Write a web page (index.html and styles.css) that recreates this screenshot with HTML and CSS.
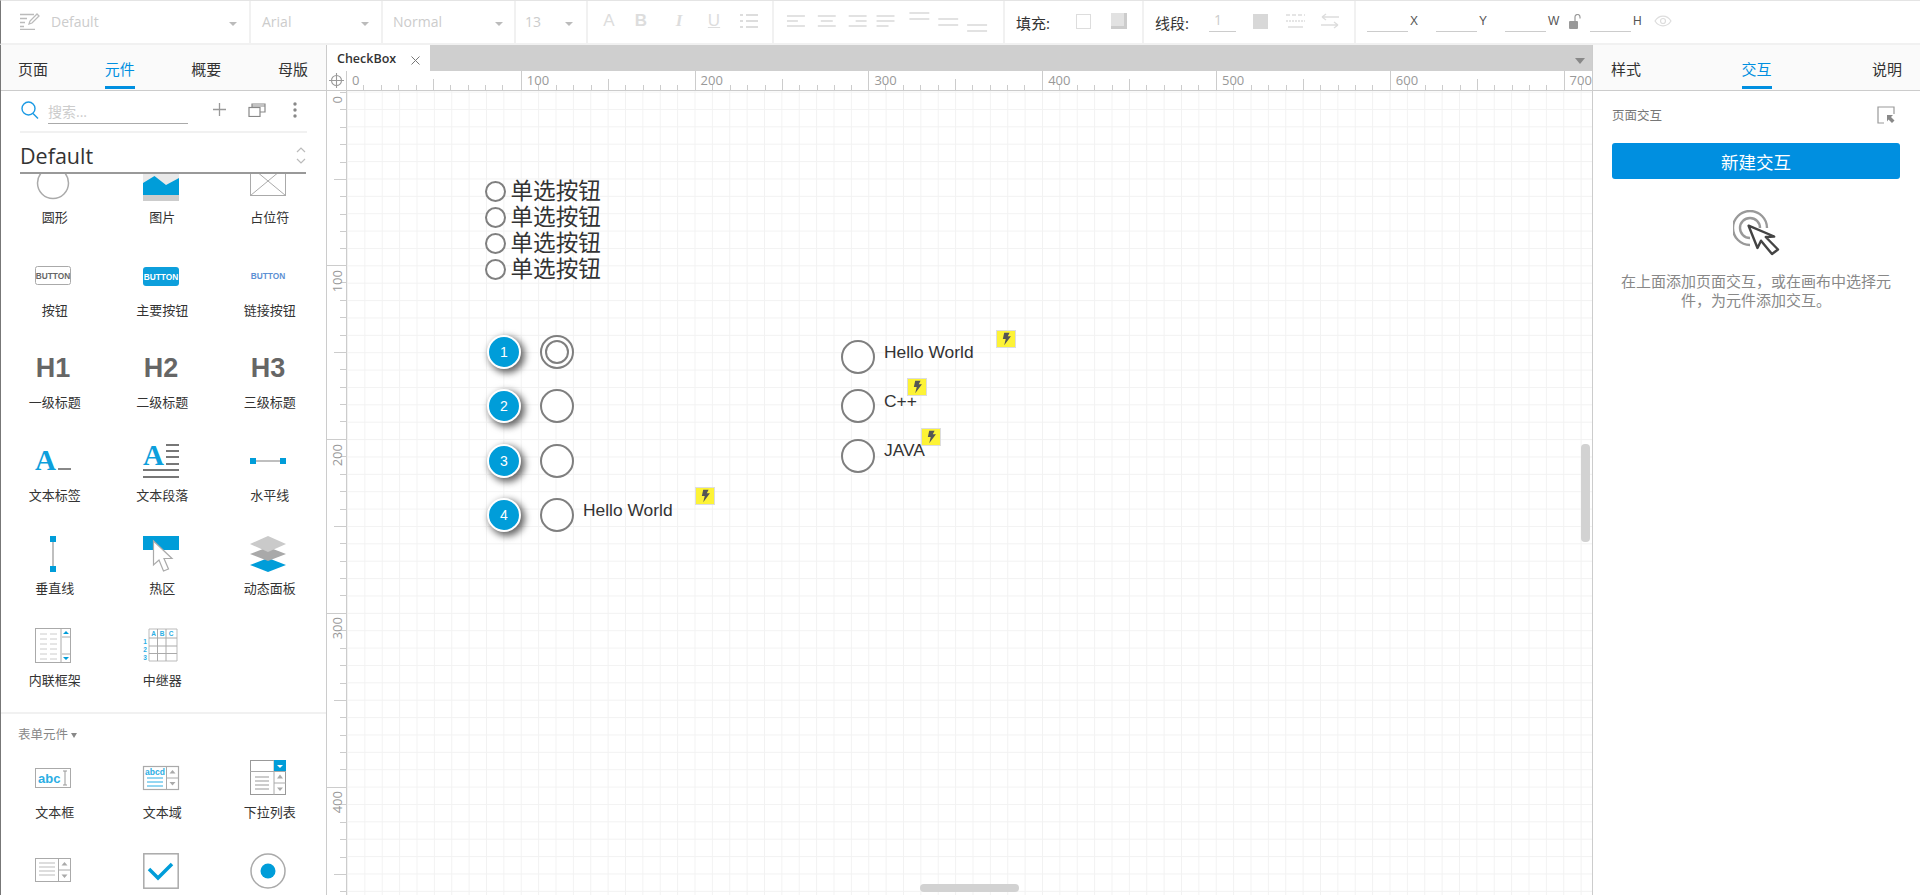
FILE: index.html
```html
<!DOCTYPE html>
<html lang="zh-CN">
<head>
  <meta charset="UTF-8" />
  <title>CheckBox</title>
  <link rel="stylesheet" href="styles.css">
</head>
<body>
  <svg class="defs" width="0" height="0">
    <symbol id="bolt" viewBox="0 0 20 17">
      <path d="M8 1.500h6l-2 4h3.500l-7.500 10 1.700-7h-3.200z" fill="#555"/>
    </symbol>
  </svg>

  <header class="toolbar">
    <div class="tb-group g-style">
      <svg class="tb-edit" width="20" height="18" viewBox="0 0 20 18" fill="none" stroke="#bbb" stroke-width="1.300"><path d="M0 2.500h14M0 6.500h7M0 10.500h5M0 14.500h4M0 17.300h15"/><path d="M9 12l1-3 7-7 2 2-7 7z"/></svg>
      <span class="tb-value">Default</span><i class="caret"></i>
    </div>
    <div class="tb-group g-font"><span class="tb-value">Arial</span><i class="caret"></i></div>
    <div class="tb-group g-weight"><span class="tb-value">Normal</span><i class="caret"></i></div>
    <div class="tb-group g-size"><span class="tb-value">13</span><i class="caret"></i></div>
    <div class="tb-group g-text">
      <span class="fmt">A</span><span class="fmt bold">B</span><span class="fmt ital">I</span><span class="fmt under">U</span>
      <svg width="18" height="16" viewBox="0 0 18 16" fill="none" stroke="#ddd" stroke-width="2"><path d="M0 2h3M6 2h12M0 8h3M6 8h12M0 14h3M6 14h12"/></svg>
    </div>
    <div class="tb-group g-align">
      <svg width="230" height="44" viewBox="0 0 230 44" fill="none" stroke="#e2e2e2" stroke-width="2">
        <path d="M13 17h18M13 22h11M13 27h18M44 17h18M47 22h12M44 27h18M75 17h18M82 22h11M75 27h18M103 17h18M103 22h18M103 27h12"/>
        <path d="M136 14h20M136 20h20M165 20h20M165 26h20M194 26h20M194 32h20"/>
      </svg>
    </div>
    <div class="tb-group g-fill">
      <span class="tb-label">填充:</span>
      <i class="swatch empty"></i>
      <i class="swatch shade"></i>
    </div>
    <div class="tb-group g-line">
      <span class="tb-label">线段:</span>
      <span class="line-num">1</span>
      <i class="swatch solid"></i>
      <svg width="19" height="16" viewBox="0 0 19 16" fill="none" stroke="#ddd" stroke-width="1.500"><path d="M0 2h19" stroke-dasharray="4 2"/><path d="M0 8h19" stroke-dasharray="2 1"/><path d="M2 14h15"/></svg>
      <svg width="18" height="16" viewBox="0 0 18 16" fill="none" stroke="#ddd" stroke-width="1.300"><path d="M1 4h17M1 4l4-3M1 4l4 3M0 12h17M17 12l-4-3M17 12l-4 3"/></svg>
    </div>
    <div class="tb-group g-geom">
      <span class="field"></span><span class="field-key">X</span>
      <span class="field"></span><span class="field-key">Y</span>
      <span class="field"></span><span class="field-key key-w">W</span>
      <svg class="lock" width="12" height="15" viewBox="0 0 12 15"><path d="M6 7V3a2.500 2.500 0 0 1 5 0v1.500" fill="none" stroke="#999" stroke-width="1.200"/><rect x="0" y="7" width="9" height="8" rx="1" fill="#999"/></svg>
      <span class="field"></span><span class="field-key key-h">H</span>
      <svg class="eye" width="18" height="12" viewBox="0 0 18 12" fill="none" stroke="#ddd" stroke-width="1.200"><path d="M1 6c4-6.500 12-6.500 16 0-4 6.500-12 6.500-16 0z"/><circle cx="9" cy="6" r="2.500"/></svg>
    </div>
  </header>

  <main class="workspace">
    <aside class="left-panel">
      <nav class="tabs">
        <span class="tab">页面</span><span class="tab active">元件</span><span class="tab">概要</span><span class="tab">母版</span>
      </nav>
      <div class="search-row">
        <svg class="search-icon" width="18" height="18" viewBox="0 0 18 18" fill="none" stroke="#1b9ae4" stroke-width="1.400"><circle cx="7.500" cy="7.500" r="6.500"/><path d="M12 12.500l5 5"/></svg>
        <span class="search-input">搜索...</span>
        <svg class="search-add" width="13" height="13" viewBox="0 0 13 13" stroke="#999" stroke-width="1.300"><path d="M6.500 0v13M0 6.500h13"/></svg>
        <svg class="search-copy" width="18" height="14" viewBox="0 0 18 14" fill="none" stroke="#888" stroke-width="1.200"><rect x="1" y="4.500" width="11" height="9"/><path d="M4 4.500V1h13v8h-5M4 3h13"/></svg>
        <svg class="search-more" width="4" height="16" viewBox="0 0 4 16" fill="#888"><circle cx="2" cy="2" r="1.700"/><circle cx="2" cy="8" r="1.700"/><circle cx="2" cy="14" r="1.700"/></svg>
      </div>
      <div class="library">
        <span>Default</span>
        <svg width="10" height="17" viewBox="0 0 10 17" fill="none" stroke="#bbb" stroke-width="1.200"><path d="M1 5l4-4 4 4M1 12l4 4 4-4"/></svg>
      </div>

      <div class="widget-scroll">
        <div class="widget-grid basic">
          <div class="widget">
            <svg viewBox="0 0 36 36" fill="none"><circle cx="18" cy="18" r="15.500" stroke="#aaa" stroke-width="1.500"/></svg>
            <span>圆形</span>
          </div>
          <div class="widget">
            <svg viewBox="0 0 36 36"><rect y="9" width="36" height="27" fill="#e9e9e9"/><rect y="30" width="36" height="6" fill="#ccc"/><path d="M0 18l11.500-7L23 20l13-7v17H0z" fill="#009dd9"/></svg>
            <span>图片</span>
          </div>
          <div class="widget">
            <svg viewBox="0 0 36 36" fill="none" stroke="#aaa" stroke-width="1"><rect x=".5" y="1.500" width="35" height="29"/><path d="M.5 1.500l35 29M35.500 1.500l-35 29"/></svg>
            <span>占位符</span>
          </div>

          <div class="widget">
            <svg viewBox="0 0 36 36"><rect x=".5" y="8.500" width="35" height="18" rx="2" fill="#fff" stroke="#aaa"/><text x="18" y="20.500" class="ico-btn" fill="#666">BUTTON</text></svg>
            <span>按钮</span>
          </div>
          <div class="widget">
            <svg viewBox="0 0 36 36"><rect y="9" width="36" height="19" rx="3" fill="#0d9fdc"/><text x="18" y="21.500" class="ico-btn" fill="#fff">BUTTON</text></svg>
            <span>主要按钮</span>
          </div>
          <div class="widget">
            <svg viewBox="0 0 36 36"><text x="18" y="20.500" class="ico-btn" fill="#5c8fd3">BUTTON</text></svg>
            <span>链接按钮</span>
          </div>

          <div class="widget">
            <svg viewBox="0 0 36 36"><text x="18" y="27" class="ico-h">H1</text></svg>
            <span>一级标题</span>
          </div>
          <div class="widget">
            <svg viewBox="0 0 36 36"><text x="18" y="27" class="ico-h">H2</text></svg>
            <span>二级标题</span>
          </div>
          <div class="widget">
            <svg viewBox="0 0 36 36"><text x="18" y="27" class="ico-h">H3</text></svg>
            <span>三级标题</span>
          </div>

          <div class="widget">
            <svg viewBox="0 0 36 36"><text x="0" y="27" class="ico-a">A</text><rect x="23" y="25" width="13" height="2" fill="#888"/></svg>
            <span>文本标签</span>
          </div>
          <div class="widget">
            <svg viewBox="0 0 36 36"><text x="0" y="22" class="ico-a">A</text><path d="M23 2h13M23 8h13M23 14h13M23 21h13M0 27h36M0 34h36" stroke="#777" stroke-width="2.200"/></svg>
            <span>文本段落</span>
          </div>
          <div class="widget">
            <svg viewBox="0 0 36 36"><path d="M3 18h30" stroke="#aaa" stroke-width="1.500"/><rect y="15" width="6" height="6" fill="#009dd9"/><rect x="30" y="15" width="6" height="6" fill="#009dd9"/></svg>
            <span>水平线</span>
          </div>

          <div class="widget">
            <svg viewBox="0 0 36 36"><path d="M18 3v30" stroke="#aaa" stroke-width="1.500"/><rect x="15" width="6" height="6" fill="#009dd9"/><rect x="15" y="30" width="6" height="6" fill="#009dd9"/></svg>
            <span>垂直线</span>
          </div>
          <div class="widget">
            <svg viewBox="0 0 36 36"><rect width="36" height="14" fill="#009dd9"/><path d="M10.500 5v24l5.500-5 4.500 11 5-2-4.500-10.500h8z" fill="#fff" stroke="#aaa" stroke-width="1.200"/></svg>
            <span>热区</span>
          </div>
          <div class="widget">
            <svg viewBox="0 0 36 36"><path d="M18 22l18 7-18 7-18-7z" fill="#009dd9"/><path d="M18 11l18 7-18 7-18-7z" fill="#a9a9a9"/><path d="M18 0l18 8-18 8-18-8z" fill="#cacaca"/></svg>
            <span>动态面板</span>
          </div>

          <div class="widget">
            <svg viewBox="0 0 36 36" fill="none"><rect x=".5" y=".5" width="35" height="34" stroke="#aaa"/><path d="M26 0v35" stroke="#aaa"/><path d="M5 6h7M15 6h7M5 11h7M15 11h7M5 16h7M15 16h7M5 21h7M15 21h7M5 26h7M15 26h7M5 31h7M15 31h7" stroke="#ccc"/><path d="M27 9h8M27 26h8" stroke="#aaa"/><path d="M31 3l3 3h-6zM31 32l3-3h-6z" fill="#009dd9"/></svg>
            <span>内联框架</span>
          </div>
          <div class="widget">
            <svg viewBox="0 0 36 36" fill="none"><path d="M6 1h28v32H6z" stroke="#bbb"/><path d="M6 10h28M6 18h28M6 25.500h28M14.500 1v32M23 1v32" stroke="#aaa"/><text x="10.500" y="8" class="ico-rep">A</text><text x="19" y="8" class="ico-rep">B</text><text x="28" y="8" class="ico-rep">C</text><text x="2" y="16" class="ico-rep">1</text><text x="2" y="24" class="ico-rep">2</text><text x="2" y="32" class="ico-rep">3</text></svg>
            <span>中继器</span>
          </div>
        </div>

        <div class="section-head">表单元件 <i class="section-caret"></i></div>

        <div class="widget-grid form">
          <div class="widget">
            <svg viewBox="0 0 36 36" fill="none"><rect x=".5" y="8.500" width="35" height="19" fill="#fff" stroke="#aaa"/><text x="3" y="23" class="ico-abc">abc</text><path d="M28 11h4M28 25h4M30 11v14" stroke="#999"/></svg>
            <span>文本框</span>
          </div>
          <div class="widget">
            <svg viewBox="0 0 36 36" fill="none"><rect x=".5" y="6.500" width="35" height="23" stroke="#aaa" stroke-width="1.200"/><path d="M23.500 6v24M23.500 18h12" stroke="#aaa"/><text x="2" y="15" class="ico-abcd">abcd</text><path d="M4 18h16M4 22h16M4 26h16" stroke="#2baee4"/><path d="M29.500 10l3 3.500h-6zM29.500 25.500l3-3.500h-6z" fill="#aaa"/></svg>
            <span>文本域</span>
          </div>
          <div class="widget">
            <svg viewBox="0 0 36 36" fill="none"><rect x=".5" y=".5" width="35" height="34" stroke="#999"/><path d="M0 11.500h36M24 0v35M24 23h12" stroke="#aaa"/><rect x="24" width="12" height="11" fill="#009dd9"/><path d="M30 8l3-3h-6z" fill="#fff"/><path d="M5 17h14M5 21h14M5 25h14M5 29h14" stroke="#999"/><path d="M30 14.500l3 4h-6zM30 31l3-3.500h-6z" fill="#aaa"/></svg>
            <span>下拉列表</span>
          </div>
          <div class="widget">
            <svg viewBox="0 0 36 36" fill="none"><rect x=".5" y="5.500" width="35" height="23" stroke="#aaa"/><path d="M23.500 5v24M23.500 17h12" stroke="#aaa"/><path d="M4 10h16M4 14h16M4 18h16M4 22h16" stroke="#bbb"/><path d="M29.500 9l3 3.500h-6zM29.500 25l3-3.500h-6z" fill="#aaa"/></svg>
          </div>
          <div class="widget">
            <svg viewBox="0 0 36 36" fill="none"><rect x=".8" y=".8" width="34.400" height="34.400" stroke="#aaa" stroke-width="1.500"/><path d="M6 16l9 9L29 11" stroke="#009dd9" stroke-width="3.500"/></svg>
          </div>
          <div class="widget">
            <svg viewBox="0 0 36 36" fill="none"><circle cx="18" cy="18" r="17" stroke="#aaa" stroke-width="1.500"/><circle cx="18" cy="18" r="7.500" fill="#009dd9"/></svg>
          </div>
        </div>
      </div>
    </aside>

    <section class="center">
      <div class="tabstrip">
        <div class="doc-tab">
          <span>CheckBox</span>
          <svg width="9" height="9" viewBox="0 0 9 9" stroke="#777" stroke-width="1"><path d="M.5.500l8 8M8.500.500l-8 8"/></svg>
        </div>
        <i class="strip-caret"></i>
      </div>
      <div class="ruler-row">
        <div class="ruler-corner">
          <svg width="15" height="15" viewBox="0 0 15 15" fill="none" stroke="#999" stroke-width="1.100"><circle cx="7.500" cy="7.500" r="5"/><path d="M7.500 0v15M0 7.500h15"/></svg>
        </div>
        <div class="ruler-h">
          <span>0</span><span>100</span><span>200</span><span>300</span><span>400</span><span>500</span><span>600</span><span>700</span>
        </div>
      </div>
      <div class="canvas-row">
        <div class="ruler-v">
          <span><b>0</b></span><span><b>100</b></span><span><b>200</b></span><span><b>300</b></span><span><b>400</b></span>
        </div>
        <div class="canvas">
          <ul class="radio-list">
            <li><i></i>单选按钮</li>
            <li><i></i>单选按钮</li>
            <li><i></i>单选按钮</li>
            <li><i></i>单选按钮</li>
          </ul>

          <span class="marker m1">1</span>
          <span class="marker m2">2</span>
          <span class="marker m3">3</span>
          <span class="marker m4">4</span>

          <i class="ring r1"><i class="ring-inner"></i></i>
          <i class="ring r2"></i>
          <i class="ring r3"></i>
          <i class="ring r4"></i>
          <span class="label l1">Hello World</span>
          <svg class="badge b1"><use href="#bolt"/></svg>

          <i class="ring r5"></i>
          <i class="ring r6"></i>
          <i class="ring r7"></i>
          <span class="label l2">Hello World</span>
          <span class="label l3">C++</span>
          <span class="label l4">JAVA</span>
          <svg class="badge b2"><use href="#bolt"/></svg>
          <svg class="badge b3"><use href="#bolt"/></svg>
          <svg class="badge b4"><use href="#bolt"/></svg>

          <i class="scroll-v"></i>
          <i class="scroll-h"></i>
        </div>
      </div>
    </section>

    <aside class="right-panel">
      <nav class="tabs">
        <span class="tab">样式</span><span class="tab active">交互</span><span class="tab">说明</span>
      </nav>
      <div class="right-body">
        <div class="page-head">
          <span>页面交互</span>
          <svg width="18" height="18" viewBox="0 0 18 18" fill="none" stroke="#999" stroke-width="1.200"><path d="M7 17H1V1h16v7"/><path d="M10 9h6l-2 2 3.500 3.500-2.500 2.500-3.500-3.500-1.500 2z" fill="#888" stroke="none"/></svg>
        </div>
        <button class="new-btn" type="button">新建交互</button>
        <svg class="hint-icon" width="47" height="46" viewBox="0 0 47 46" fill="none">
          <path d="M34 18A17 17 0 1 0 17 35M27 18A10 10 0 1 0 17 28" stroke="#999" stroke-width="2.400"/>
          <path d="M15.600 15.700L24.500 38l3.500-7.300L39 44l6-4.500-12.300-12.500 8.500-.5z" fill="#fff" stroke="#444" stroke-width="2.400" stroke-linejoin="round"/>
        </svg>
        <p class="hint">在上面添加页面交互，或在画布中选择元件，为元件添加交互。</p>
      </div>
    </aside>
  </main>
</body>
</html>
```

FILE: styles.css
```css
* { box-sizing: border-box; }
html, body { height: 100%; }
body { margin: 0; overflow: hidden; background: #fff; color: #333; font-family: "Open Sans", "Noto Sans CJK SC", sans-serif; display: flex; flex-direction: column; }
i { display: block; font-style: normal; }
.defs { position: absolute; }

/* top toolbar */
.toolbar { height: 45px; flex: none; display: flex; border-top: 1px solid #e4e4e4; border-left: 1px solid #777; border-bottom: 2px solid #f1f1f1; }
.tb-group { height: 100%; display: flex; align-items: center; padding-bottom: 2px; border-right: 2px solid #f1f1f1; flex: none; }
.tb-value { font-size: 14px; color: #ccc; }
.caret { width: 0; height: 0; border: 4px solid transparent; border-top: 4px solid #bbb; border-bottom: 0; margin-left: auto; margin-top: 6px; }
.g-style { width: 250px; padding-left: 19px; padding-right: 12px; }
.tb-edit { margin-right: 11px; }
.g-font { width: 132px; padding-left: 11px; padding-right: 12px; }
.g-weight { width: 133px; padding-left: 10px; padding-right: 11px; }
.g-size { width: 72px; padding-left: 9px; padding-right: 13px; }
.g-text { width: 186px; padding-left: 12px; gap: 17px; }
.fmt { width: 18px; text-align: center; font-size: 17px; color: #ddd; font-family: "Liberation Sans", sans-serif; }
.bold { font-weight: bold; margin-left: -3px; margin-right: 3px; }
.ital { font-style: italic; font-family: "Liberation Serif", serif; font-weight: bold; }
.under { text-decoration: underline; }
.g-align { width: 231px; }
.g-fill { width: 139px; padding-left: 11px; }
.tb-label { font-size: 15px; color: #333; margin-top: 3px; white-space: nowrap; }
.swatch { width: 15px; height: 15px; flex: none; }
.swatch.empty { border: 1px solid #ddd; margin-left: 26px; }
.swatch.shade { width: 16px; height: 16px; margin-left: 20px; background: #e2e2e2; box-shadow: inset -3px -3px 0 #ccc; }
.swatch.solid { background: #d8d8d8; margin-left: 17px; margin-right: 18px; }
.g-line { width: 212px; padding-left: 11px; }
.line-num { width: 27px; margin-left: 20px; height: 22px; padding-left: 5px; font-size: 14px; line-height: 20px; color: #ccc; border-bottom: 1px solid #ccc; margin-top: -1px; }
.g-line svg:last-child { margin-left: 16px; }
.g-geom { border-right: 0; padding-left: 11px; flex: 1; }
.field { width: 41px; height: 22px; border-bottom: 1px solid #ccc; margin-top: -1px; }
.field-key { font-size: 12px; color: #555; width: 28px; padding-left: 2px; font-family: "Liberation Sans", sans-serif; }
.key-w { width: 23px; }
.lock { margin-right: 9px; }
.key-h { width: 23px; }

/* panels */
.workspace { flex: 1; min-height: 0; display: flex; }
.left-panel { width: 327px; flex: none; border-left: 1px solid #777; border-right: 1px solid #ccc; display: flex; flex-direction: column; }
.right-panel { flex: 1; border-left: 1px solid #ccc; }
.tabs { height: 46px; flex: none; display: flex; justify-content: space-between; padding: 0 18px 0 17px; background: #fafafa; border-bottom: 1px solid #ccc; }
.right-panel .tabs { padding: 0 18px; }
.tab { width: 30px; padding-top: 12px; font-size: 15px; line-height: 24px; height: 44px; white-space: nowrap; color: #333; }
.tab.active { color: #008fe0; border-bottom: 3px solid #008fe0; height: 44px; }

/* search + library */
.search-row { height: 42px; flex: none; margin: 0 19px; display: flex; align-items: center; border-bottom: 2px solid #f1f1f1; padding-bottom: 3px; }
.search-icon { margin-left: 1px; }
.search-input { width: 140px; height: 22px; margin: 6px 0 0 9px; border-bottom: 1px solid #aaa; font-size: 14px; line-height: 20px; color: #ccc; }
.search-add { margin-left: 25px; }
.search-copy { margin-left: 22px; }
.search-more { margin-left: 27px; }
.library { height: 41px; flex: none; margin: 0 20px 0 19px; padding: 5px 0 0; display: flex; align-items: center; justify-content: space-between; border-bottom: 2px solid #999; }
.library span { font-size: 21.500px; color: #333; }
.widget-scroll { flex: 1; min-height: 0; overflow: hidden; }
.widget-grid { display: grid; grid-template-columns: repeat(3, 107.500px); grid-auto-rows: 92.700px; }
.basic { margin-top: -9px; }
.widget { display: flex; flex-direction: column; align-items: center; }
.widget svg { width: 36px; height: 36px; flex: none; margin-right: 3px; overflow: visible; }
.widget span { margin-top: 6px; font-size: 13px; line-height: 20px; color: #333; white-space: nowrap; }
.section-head { height: 48px; margin-top: -9px; padding: 11px 0 15px 17px; border-top: 2px solid #f1f1f1; font-size: 12.500px; line-height: 20px; color: #888; display: flex; align-items: center; gap: 3px; }
.section-caret { width: 0; height: 0; border: 3.500px solid transparent; border-top: 5px solid #888; border-bottom: 0; }
.ico-btn { font: bold 8.300px "Liberation Sans", sans-serif; text-anchor: middle; }
.ico-h { font: bold 27px "Liberation Sans", sans-serif; text-anchor: middle; fill: #666; }
.ico-a { font: bold 29px "Liberation Serif", serif; fill: #0d9fdc; }
.ico-rep { font: bold 6.500px "Liberation Sans", sans-serif; text-anchor: middle; fill: #2baee4; }
.ico-abc { font: bold 13px "Liberation Sans", sans-serif; fill: #2baee4; }
.ico-abcd { font: bold 8.500px "Liberation Sans", sans-serif; fill: #2baee4; }

/* center */
.center { width: 1265px; flex: none; display: flex; flex-direction: column; }
.tabstrip { height: 26px; flex: none; background: #cfcfcf; display: flex; position: relative; }
.doc-tab { width: 103px; background: #fff; display: flex; align-items: center; padding: 0 10px; justify-content: space-between; font-size: 12.500px; font-weight: 600; color: #333; }
.doc-tab svg { margin-top: 4px; }
.strip-caret { position: absolute; right: 7px; top: 13px; width: 0; height: 0; border: 5.500px solid transparent; border-top: 6px solid #888; border-bottom: 0; }
.ruler-row { height: 20px; flex: none; display: flex; border-bottom: 1px solid #ccc; overflow: hidden; }
.ruler-corner { width: 20px; flex: none; display: flex; align-items: center; justify-content: center; border-right: 1px solid #ccc; }
.ruler-h { flex: 1; display: flex; overflow: hidden; }
.ruler-h span {
  width: 173.800px; flex: none; border-left: 1px solid #ccc; padding-left: 5px;
  font-size: 13px; line-height: 18px; color: #999;
  background-image: linear-gradient(#ccc, #ccc), repeating-linear-gradient(to right, #ccc 0 1px, transparent 1px 17.380px);
  background-size: 1px 11px, 100% 5px;
  background-position: 86px bottom, -1px bottom;
  background-repeat: no-repeat;
}
.ruler-h span:first-child { border-left: 0; }
.canvas-row { flex: 1; min-height: 0; display: flex; }
.ruler-v { width: 20px; flex: none; border-right: 1px solid #ccc; overflow: hidden; }
.ruler-v span {
  display: block; height: 173.800px; position: relative;
  background-image: linear-gradient(#ccc, #ccc), linear-gradient(#ccc, #ccc), repeating-linear-gradient(#ccc 0 1px, transparent 1px 17.380px);
  background-size: 100% 1px, 12px 1px, 6px 100%;
  background-position: 0 0.600px, right 87.500px, right 0.600px;
  background-repeat: no-repeat;
}
.ruler-v span:first-child { background-size: 0 0, 12px 1px, 6px 100%; }
.ruler-v b { position: absolute; left: 3px; top: 5px; font-size: 13px; font-weight: 400; line-height: 14px; color: #999; writing-mode: vertical-rl; transform: rotate(180deg); }
.canvas {
  flex: 1; position: relative; overflow: hidden; background-color: #fff;
  background-image: linear-gradient(to right, #f2f2f2 1px, transparent 1px), linear-gradient(#f2f2f2 1px, transparent 1px);
  background-size: 17.380px 17.380px;
  background-position: 0 0.600px;
}

/* items on the canvas, offsets from 347,91 */
.radio-list { position: absolute; left: 138px; top: 87px; margin: 0; padding: 0; list-style: none; font-size: 22.600px; line-height: 26px; color: #333; }
.radio-list li { display: flex; align-items: center; gap: 4.500px; height: 26px; white-space: nowrap; }
.radio-list i { width: 21px; height: 21px; border: 2px solid #7f7f7f; border-radius: 50%; background: #fff; }
.marker { position: absolute; left: 140px; width: 34px; height: 34px; border-radius: 50%; background: #009dd9; border: 2px solid #fff; box-shadow: 3px 3px 7px 1px rgba(0, 0, 0, .6); color: #fff; font: 14px/30px "Liberation Sans", sans-serif; text-align: center; }
.m1 { top: 244px; }
.m2 { top: 298px; }
.m3 { top: 353px; }
.m4 { top: 407px; }
.ring { position: absolute; width: 34px; height: 34px; border: 2px solid #7f7f7f; border-radius: 50%; background: #fff; }
.ring-inner { width: 24px; height: 24px; margin: 3px; border: 2px solid #7f7f7f; border-radius: 50%; }
.r1 { left: 193px; top: 244px; }
.r2 { left: 193px; top: 298px; }
.r3 { left: 193px; top: 353px; }
.r4 { left: 193px; top: 407px; }
.r5 { left: 494px; top: 249px; }
.r6 { left: 494px; top: 298px; }
.r7 { left: 494px; top: 348px; }
.label { position: absolute; font: 17.400px/20px "Liberation Sans", sans-serif; color: #333; white-space: nowrap; }
.l1 { left: 236px; top: 409px; }
.l2 { left: 537px; top: 251px; }
.l3 { left: 537px; top: 300px; }
.l4 { left: 537px; top: 349px; }
.badge { position: absolute; width: 20px; height: 18px; background: #fdf336; border: 1px solid #ddd; }
.b1 { left: 348px; top: 396px; }
.b2 { left: 649px; top: 239px; }
.b3 { left: 560px; top: 287px; }
.b4 { left: 574px; top: 337px; }
.scroll-v { position: absolute; left: 1234px; top: 353px; width: 9px; height: 98px; border-radius: 4px; background: #d2d2d2; }
.scroll-h { position: absolute; left: 573px; top: 793px; width: 99px; height: 8px; border-radius: 4px; background: #d2d2d2; }

/* right panel */
.right-body { padding: 0 20px 0 19px; display: flex; flex-direction: column; }
.page-head { height: 52px; flex: none; display: flex; align-items: center; justify-content: space-between; font-size: 12.500px; color: #777; padding: 0 5px 6px 0; }
.page-head svg { margin-top: 2px; }
.new-btn { width: 288px; height: 36px; flex: none; border: 0; border-radius: 3px; background: #008fe0; color: #fff; font: 17.500px "Open Sans", "Noto Sans CJK SC", sans-serif; }
.hint-icon { align-self: center; margin: 31px 0 0 0; flex: none; }
.hint { width: 276px; margin: 16px 0 0 6px; font-size: 15px; line-height: 19px; color: #888; text-align: center; }
```
